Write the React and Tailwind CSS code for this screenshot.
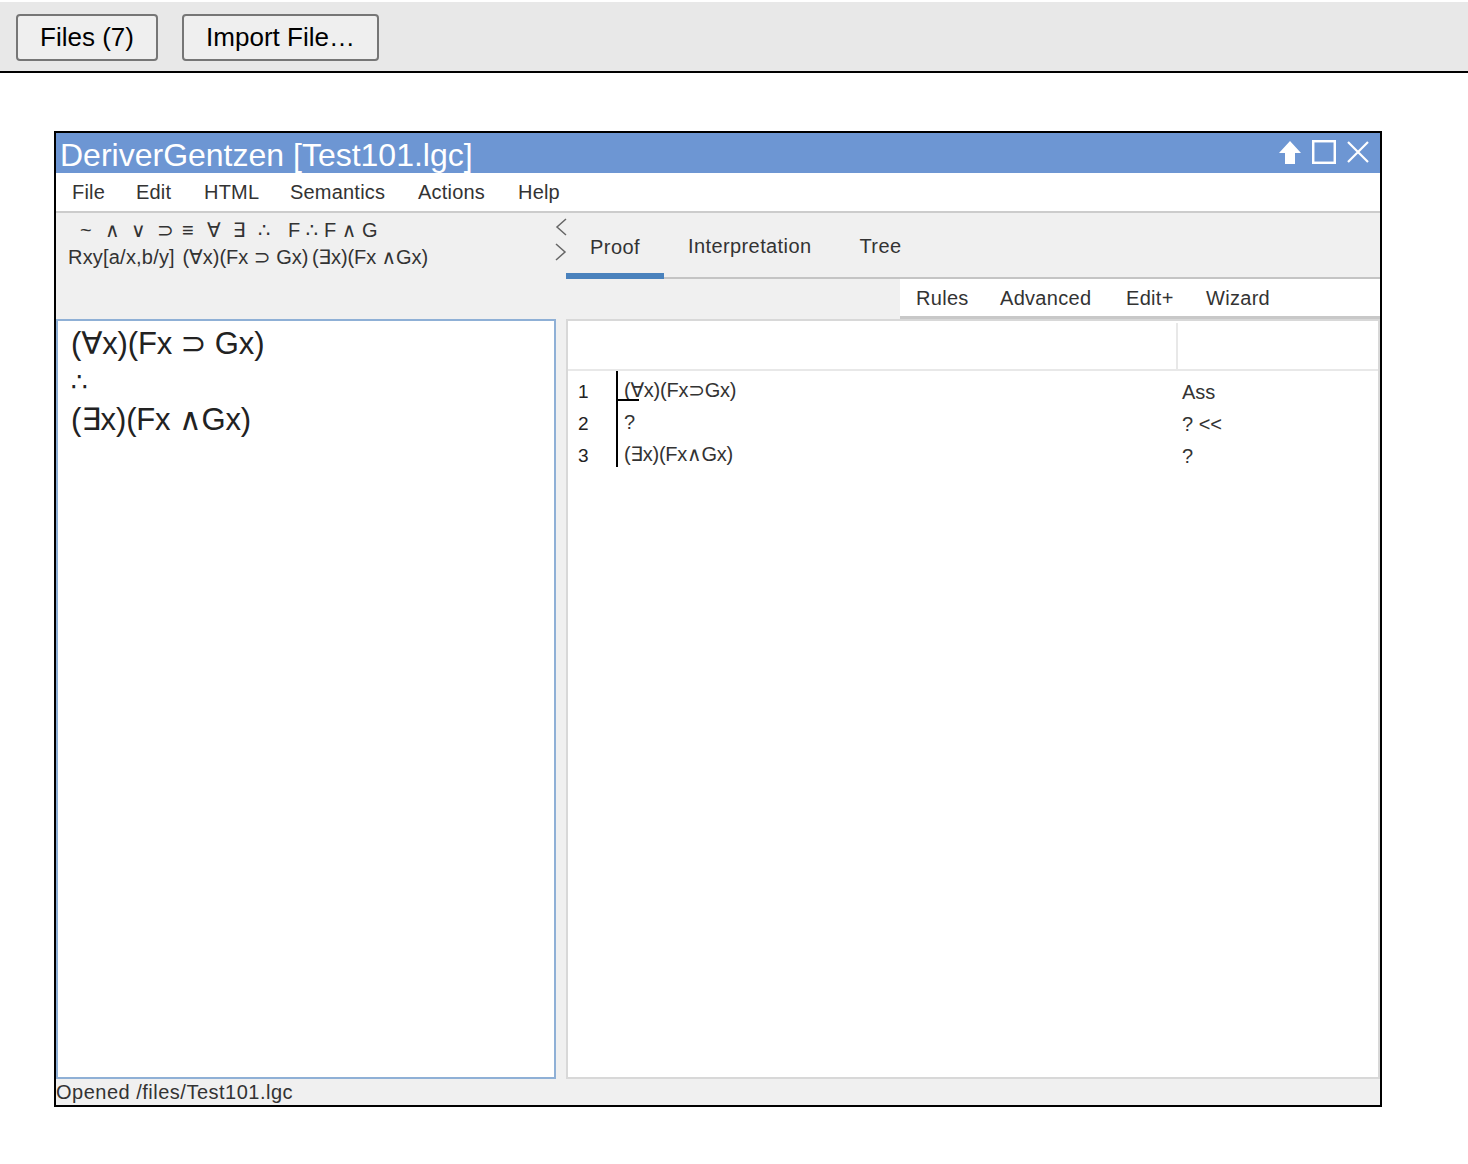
const font = { fontFamily: '"Liberation Sans", "DejaVu Sans", sans-serif' };

function ProofRow({ num, formula, just, first }) {
  return (
    <div className="flex h-8 text-[20px] leading-[24px] text-[#333]">
      <span className="w-[48px] shrink-0 pt-[9px] pl-[10px] text-[19px] text-[#222]">{num}</span>
      <div className="relative h-8 w-[566px] shrink-0 border-l-2 border-black pt-[7px] pl-[6px] tracking-[-0.25px]">
        <span className="whitespace-nowrap">{formula}</span>
        {first && <div className="absolute bottom-[2px] left-0 h-[2px] w-[21px] bg-black" />}
      </div>
      <span className="pt-[9px] whitespace-nowrap">{just}</span>
    </div>
  );
}

export default function App() {
  return (
    <div style={font} className="h-[1164px] w-[1468px] overflow-hidden bg-white pt-[2px]">
      {/* page header */}
      <div className="flex h-[71px] items-start gap-[24px] border-b-2 border-black bg-[#e8e8e8] pt-[12px] pl-[16px]">
        <button className="h-[47px] w-[142px] rounded-[4px] border-2 border-[#767676] bg-[#efefef] text-[26px] text-black">Files (7)</button>
        <button className="h-[47px] w-[197px] rounded-[4px] border-2 border-[#767676] bg-[#efefef] text-[26px] text-black">Import File…</button>
      </div>

      {/* window */}
      <div className="mt-[58px] ml-[54px] flex h-[976px] w-[1328px] flex-col border-2 border-black">
        <div className="flex h-[40px] shrink-0 items-center justify-between bg-[#6d96d3] pr-[10px] pl-[4px]">
          <span className="pt-[4px] text-[32px] leading-[44px] whitespace-nowrap text-white">DeriverGentzen [Test101.lgc]</span>
          <div className="flex items-center gap-[10px] pb-[3px]">
            <svg width="24" height="24" viewBox="0 0 24 24" fill="white"><path d="M12 1 L23 13 H17 V24 H7 V13 H1 Z" /></svg>
            <svg width="24" height="24" viewBox="0 0 24 24" fill="none" stroke="white" strokeWidth="2.5"><rect x="1.2" y="1.2" width="21.6" height="21.6" /></svg>
            <svg width="24" height="24" viewBox="0 0 24 24" fill="none" stroke="white" strokeWidth="2.2"><path d="M2 2 L22 22 M22 2 L2 22" /></svg>
          </div>
        </div>

        <div className="flex h-[40px] shrink-0 items-center border-b-2 border-[#cccccc] bg-white pl-[16px] text-[20px] tracking-[0.2px] text-[#333]">
          <span className="w-[64px]">File</span>
          <span className="w-[68px]">Edit</span>
          <span className="w-[86px]">HTML</span>
          <span className="w-[128px]">Semantics</span>
          <span className="w-[100px]">Actions</span>
          <span>Help</span>
        </div>

        <div className="flex min-h-0 flex-1 flex-col bg-[#f0f0f0]">
          <div className="flex h-[106px] shrink-0">
            <div className="w-[496px] shrink-0 pt-[6px] pl-[12px] text-[20px] text-[#333]">
              <div className="flex h-[22px] items-center whitespace-nowrap pl-[12px]">
                <span className="w-[25px]">~</span>
                <span className="w-[26px]">∧</span>
                <span className="w-[26px]">∨</span>
                <span className="w-[25px]">⊃</span>
                <span className="w-[25px]">≡</span>
                <span className="w-[26px]">∀</span>
                <span className="w-[25px]">∃</span>
                <span className="w-[30px]">∴</span>
                <span>F ∴ F ∧ G</span>
              </div>
              <div className="mt-[1px] whitespace-nowrap">
                <span className="tracking-[0.2px]">Rxy[a/x,b/y]</span> <span className="ml-[2px]">(∀x)(Fx ⊃ Gx)</span> <span className="-ml-[2px] tracking-[-0.1px]">(∃x)(Fx ∧Gx)</span>
              </div>
            </div>

            <div className="flex w-[14px] shrink-0 flex-col pt-[5px] pl-[3px]">
              <svg width="12" height="18" viewBox="0 0 12 18" fill="none" stroke="#666" strokeWidth="1.5"><path d="M11 1 L2 9 L11 17" /></svg>
              <svg className="mt-[7px]" width="12" height="18" viewBox="0 0 12 18" fill="none" stroke="#666" strokeWidth="1.5"><path d="M1 1 L10 9 L1 17" /></svg>
            </div>

            <div className="flex min-w-0 flex-1 flex-col">
              <div className="flex h-[66px] shrink-0 border-b-2 border-[#c4c4c4] text-[20px] tracking-[0.4px] text-[#333]">
                <div className="flex h-[66px] w-[98px] items-center justify-center border-b-[6px] border-[#4a82bd] pt-[8px]">Proof</div>
                <div className="flex h-[64px] items-center pt-[2px] pl-[24px]">Interpretation</div>
                <div className="flex h-[64px] items-center pt-[2px] pl-[48px]">Tree</div>
              </div>
              <div className="flex h-[40px] flex-1 justify-end">
                <div className="flex w-[480px] items-center border-b-[3px] border-[#c8c8c8] bg-white pl-[16px] text-[20px] tracking-[0.3px] text-[#333]">
                  <span className="w-[84px]">Rules</span>
                  <span className="w-[126px]">Advanced</span>
                  <span className="w-[80px]">Edit+</span>
                  <span>Wizard</span>
                </div>
              </div>
            </div>
          </div>

          <div className="flex min-h-0 flex-1">
            <div className="w-[500px] shrink-0 border-2 border-[#8fb0d6] bg-white pt-[4px] pl-[13px] text-[31px] leading-[38px] tracking-[-0.15px] text-[#222]">
              <div>(∀x)(Fx ⊃ Gx)</div>
              <div className="text-[26px]">∴</div>
              <div>(∃x)(Fx ∧Gx)</div>
            </div>
            <div className="ml-[10px] min-w-0 flex-1 border-2 border-[#d8d8d8] bg-white">
              <div className="flex h-[50px] border-b-2 border-[#e8e8e8] pt-[2px]">
                <div className="h-[46px] w-[610px] border-r-2 border-[#e8e8e8]" />
              </div>
              <div>
                <ProofRow num="1" formula="(∀x)(Fx⊃Gx)" just="Ass" first />
                <ProofRow num="2" formula="?" just="? <<" />
                <ProofRow num="3" formula="(∃x)(Fx∧Gx)" just="?" />
              </div>
            </div>
          </div>

          <div className="flex h-[26px] shrink-0 items-center text-[20px] tracking-[0.5px] text-[#333]">Opened /files/Test101.lgc</div>
        </div>
      </div>
    </div>
  );
}
